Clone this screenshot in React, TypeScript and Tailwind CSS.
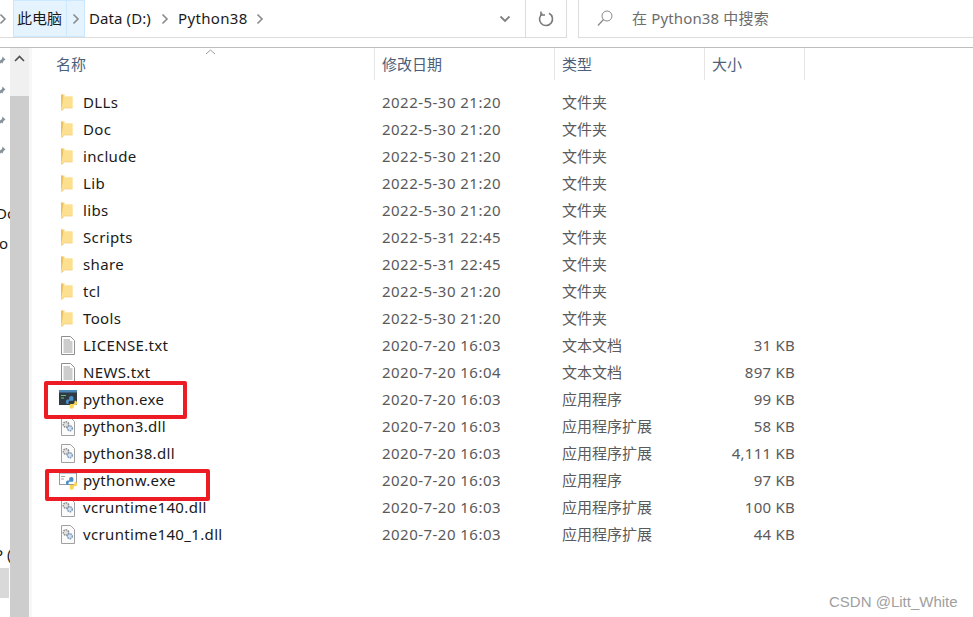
import React from "react";

const F = "[font-family:'Noto_Sans','Noto_Sans_CJK_SC',sans-serif]";

type Kind = "folder" | "txt" | "dll" | "py" | "pyw";
const rows: { n: string; d: string; t: string; s?: string; k: Kind }[] = [
  { n: "DLLs", d: "2022-5-30 21:20", t: "文件夹", k: "folder" },
  { n: "Doc", d: "2022-5-30 21:20", t: "文件夹", k: "folder" },
  { n: "include", d: "2022-5-30 21:20", t: "文件夹", k: "folder" },
  { n: "Lib", d: "2022-5-30 21:20", t: "文件夹", k: "folder" },
  { n: "libs", d: "2022-5-30 21:20", t: "文件夹", k: "folder" },
  { n: "Scripts", d: "2022-5-31 22:45", t: "文件夹", k: "folder" },
  { n: "share", d: "2022-5-31 22:45", t: "文件夹", k: "folder" },
  { n: "tcl", d: "2022-5-30 21:20", t: "文件夹", k: "folder" },
  { n: "Tools", d: "2022-5-30 21:20", t: "文件夹", k: "folder" },
  { n: "LICENSE.txt", d: "2020-7-20 16:03", t: "文本文档", s: "31 KB", k: "txt" },
  { n: "NEWS.txt", d: "2020-7-20 16:04", t: "文本文档", s: "897 KB", k: "txt" },
  { n: "python.exe", d: "2020-7-20 16:03", t: "应用程序", s: "99 KB", k: "py" },
  { n: "python3.dll", d: "2020-7-20 16:03", t: "应用程序扩展", s: "58 KB", k: "dll" },
  { n: "python38.dll", d: "2020-7-20 16:03", t: "应用程序扩展", s: "4,111 KB", k: "dll" },
  { n: "pythonw.exe", d: "2020-7-20 16:03", t: "应用程序", s: "97 KB", k: "pyw" },
  { n: "vcruntime140.dll", d: "2020-7-20 16:03", t: "应用程序扩展", s: "100 KB", k: "dll" },
  { n: "vcruntime140_1.dll", d: "2020-7-20 16:03", t: "应用程序扩展", s: "44 KB", k: "dll" },
];

function Snake() {
  return (
    <g transform="translate(5.3 1.3) scale(0.7 0.85)">
      <path d="M10.2 5.5C7.8 5.5 7 6.4 7 7.7V9.5H4.6C3.2 9.5 2.4 10.6 2.4 12.2 2.4 13.9 3.2 15 4.6 15H6V13.2C6 12 7 11.2 8.2 11.2H11.4C12.3 11.2 13 10.5 13 9.6V7.7C13 6.4 12.2 5.5 10.2 5.5Z" fill="#4b8fc7" />
      <path d="M10.4 20.5C12.8 20.5 13.6 19.6 13.6 18.3V16.5H16C17.4 16.5 18.2 15.4 18.2 13.8 18.2 12.1 17.4 11 16 11H14.6V12.8C14.6 14 13.6 14.8 12.4 14.8H9.2C8.3 14.8 7.6 15.5 7.6 16.4V18.3C7.6 19.6 8.4 20.5 10.4 20.5Z" fill="#f7d655" />
    </g>
  );
}

function Icon({ k }: { k: Kind }) {
  if (k === "folder")
    return (
      <svg width="20" height="20" viewBox="0 0 20 20">
        <path d="M2 1.5H6L6.5 3H13.5V15H2Z" fill="#fee9a8" />
        <path d="M2 1.5H4.5V16.5L2 18Z" fill="#ecc162" />
        <path d="M4.5 4H13.5V15H4.5L2 18V17Z" fill="#fde08f" />
        <path d="M4.5 14.6H13.5V15.4H4.5Z" fill="#f4d27e" />
      </svg>
    );
  if (k === "txt")
    return (
      <svg width="20" height="20" viewBox="0 0 20 20">
        <path d="M2.5 0.5H11.5L15.5 4.5V18.5H2.5Z" fill="#fff" stroke="#8f8f8f" />
        <path d="M4.5 4H11M4.5 6H13.5M4.5 8H13.5M4.5 10H13.5M4.5 12H13.5M4.5 14H13.5M4.5 16H13.5" stroke="#9a9a9a" strokeWidth="1" />
      </svg>
    );
  if (k === "dll")
    return (
      <svg width="20" height="20" viewBox="0 0 20 20">
        <path d="M2.5 0.5H11.5L15.5 4.5V18.5H2.5Z" fill="#fbfbfb" stroke="#a0a0a0" />
        <circle cx="7" cy="7.5" r="2.7" fill="#e0e0e0" stroke="#8c8c8c" strokeWidth="1.5" strokeDasharray="1.6 0.8" />
        <circle cx="10.8" cy="11.2" r="2.5" fill="#cfe0f0" stroke="#7d98b5" strokeWidth="1.4" strokeDasharray="1.6 0.8" />
      </svg>
    );
  if (k === "py")
    return (
      <svg width="20" height="20" viewBox="0 0 20 20">
        <rect x="0" y="0" width="18" height="15" fill="#2f3b44" />
        <rect x="0" y="0" width="18" height="2.5" fill="#4a87b8" />
        <path d="M2 5.5H7M2 8H5" stroke="#6fbf6f" strokeWidth="1" />
        <Snake />
      </svg>
    );
  return (
    <svg width="20" height="20" viewBox="0 0 20 20">
      <rect x="0.5" y="0.5" width="17" height="13" fill="#fff" stroke="#9a9a9a" />
      <rect x="0" y="0" width="18" height="2.5" fill="#6d8fb0" />
      <path d="M2 5.5H6M2 8H5" stroke="#a8a8a8" strokeWidth="1" />
      <Snake />
    </svg>
  );
}

function Chevron({ className = "" }: { className?: string }) {
  return (
    <svg width="8" height="12" viewBox="0 0 8 12" className={className}>
      <path d="M1.5 1.5L6 6 1.5 10.5" fill="none" stroke="#8a8a8a" strokeWidth="1.6" />
    </svg>
  );
}

function Pin() {
  return (
    <svg width="10" height="12" viewBox="0 0 10 12" className="block">
      <path d="M0 4.5L2 3 2.5 0.5 5.5 3.5 3.5 5 2.5 7.5 1 6.5 0 8Z" fill="#87929b" transform="translate(0 2)" />
    </svg>
  );
}

export default function App() {
  return (
    <div className={`relative w-[973px] h-[617px] overflow-hidden bg-white text-[15px] text-[#1a1a1a] ${F}`}>
      {/* address bar */}
      <div className="flex h-[38px] items-stretch">
        <div className="mr-[11px] flex w-[567px] shrink-0 items-stretch border-b border-r border-[#dcdcdc]">
          <div className="flex w-[13px] items-center">
            <Chevron className="ml-[-1px]" />
          </div>
          <div className="flex h-[37px] w-[54px] shrink-0 items-center whitespace-nowrap border border-[#cce8ff] bg-[#e5f3ff] px-[3px]">此电脑</div>
          <div className="flex h-[37px] w-[18px] shrink-0 items-center justify-center border border-l-0 border-[#cce8ff] bg-[#e5f3ff]">
            <Chevron />
          </div>
          <div className="ml-[4px] flex w-[62px] shrink-0 items-center whitespace-nowrap tracking-[0.1px]">Data (D:)</div>
          <div className="flex w-[27px] shrink-0 items-center pl-[10px]"><Chevron /></div>
          <div className="flex w-[69px] shrink-0 items-center whitespace-nowrap tracking-[0.35px]">Python38</div>
          <div className="flex w-[26px] shrink-0 items-center justify-center"><Chevron /></div>
          <div className="flex-1" />
          <div className="flex w-[26px] shrink-0 items-center">
            <svg width="12" height="8" viewBox="0 0 12 8"><path d="M1.5 1.5L6 6l4.5-4.5" fill="none" stroke="#808080" strokeWidth="1.8" /></svg>
          </div>
          <div className="flex w-[41px] shrink-0 items-center justify-center border-l border-[#dcdcdc]">
            <svg width="16" height="18" viewBox="0 0 16 18">
              <path d="M4.5 3.6A6.5 6.5 0 1 0 11 3.3" fill="none" stroke="#7a7a7a" strokeWidth="1.6" />
              <path d="M3 1.5V5H7" fill="none" stroke="#7a7a7a" strokeWidth="1.6" />
            </svg>
          </div>
        </div>
        <div className="flex flex-1 items-center border-b border-l border-[#dcdcdc] pl-[18px]">
          <svg width="16" height="17" viewBox="0 0 16 17">
            <circle cx="10" cy="6" r="5" fill="none" stroke="#8a8a8a" />
            <path d="M6.5 9.5L1 15.5" stroke="#8a8a8a" strokeWidth="1.3" />
          </svg>
          <span className="ml-[19px] tracking-[0.15px] text-[#6d6d6d]">在 Python38 中搜索</span>
        </div>
      </div>
      <div className="h-[9px]" />
      {/* main */}
      <div className="flex h-[570px] border-t border-[#bdbdbd]">
        {/* nav pane clip */}
        <div className="relative w-[10px] shrink-0 overflow-hidden">
          <div className="flex flex-col gap-[18px] pt-[6px]">
            <Pin /><Pin /><Pin /><Pin />
          </div>
          <div className="ml-[-3px] mt-[46px] flex flex-col gap-[7px] leading-[23px]">
            <span className="ml-[-1px]">Do</span>
            <span className="ml-[-7px]">oo</span>
          </div>
          <div className="absolute left-0 top-[495px] ml-[-6px] whitespace-nowrap">P (</div>
          <div className="absolute left-0 top-[520px] h-[30px] w-[9px] bg-[#d9d9d9]" />
        </div>
        {/* scrollbar */}
        <div className="flex w-[19px] shrink-0 flex-col bg-[#f0f0f0]">
          <div className="flex h-[48px] items-start justify-center pt-[7px]">
            <svg width="11" height="7" viewBox="0 0 11 7"><path d="M1 6L5.5 1.5 10 6" fill="none" stroke="#505050" strokeWidth="1.6" /></svg>
          </div>
          <div className="flex-1 bg-[#cdcdcd]" />
        </div>
        <div className="w-[3px] shrink-0 bg-[#f7f7f7]" />
        {/* list */}
        <div className="flex-1">
          <div className="relative flex h-[32px] text-[#4c607a]">
            <div className="flex w-[342px] items-center pl-[24px]">名称</div>
            <div className="flex w-[180px] items-center border-l border-[#e5e5e5] pl-[7px]">修改日期</div>
            <div className="flex w-[150px] items-center border-l border-[#e5e5e5] pl-[7px]">类型</div>
            <div className="flex w-[101px] items-center border-x border-[#e5e5e5] pl-[7px]">大小</div>
            <svg className="absolute left-[173px] top-[1px]" width="11" height="6" viewBox="0 0 11 6">
              <path d="M1 5L5.5 1 10 5" fill="none" stroke="#9a9a9a" />
            </svg>
          </div>
          <div className="flex flex-col pt-[9px]">
            {rows.map((r) => (
              <div key={r.n} className="flex h-[27px] items-center">
                <div className="flex w-[350px] items-center pl-[27px]">
                  <span className="flex w-[24px] shrink-0 items-center"><Icon k={r.k} /></span>
                  <span className="tracking-[0.35px]">{r.n}</span>
                </div>
                <div className="w-[180px] tracking-[0.47px] text-[#5a5a5a]">{r.d}</div>
                <div className="w-[114px] text-[#5a5a5a]">{r.t}</div>
                <div className="w-[119px] text-right tracking-[0.25px] text-[#5a5a5a]">{r.s}</div>
              </div>
            ))}
          </div>
        </div>
      </div>

      {/* annotation boxes */}
      <div className="absolute left-[44px] top-[381px] h-[38px] w-[143px] rounded-[2px] border-[4px] border-[#ed1c24]" />
      <div className="absolute left-[45px] top-[469px] h-[32px] w-[165px] rounded-[2px] border-[4px] border-[#ed1c24]" />
      <div className="absolute left-[829px] top-[591px] text-[15px] text-[#a0a0a0] [font-family:'Liberation_Sans',sans-serif]">CSDN @Litt_White</div>
    </div>
  );
}
